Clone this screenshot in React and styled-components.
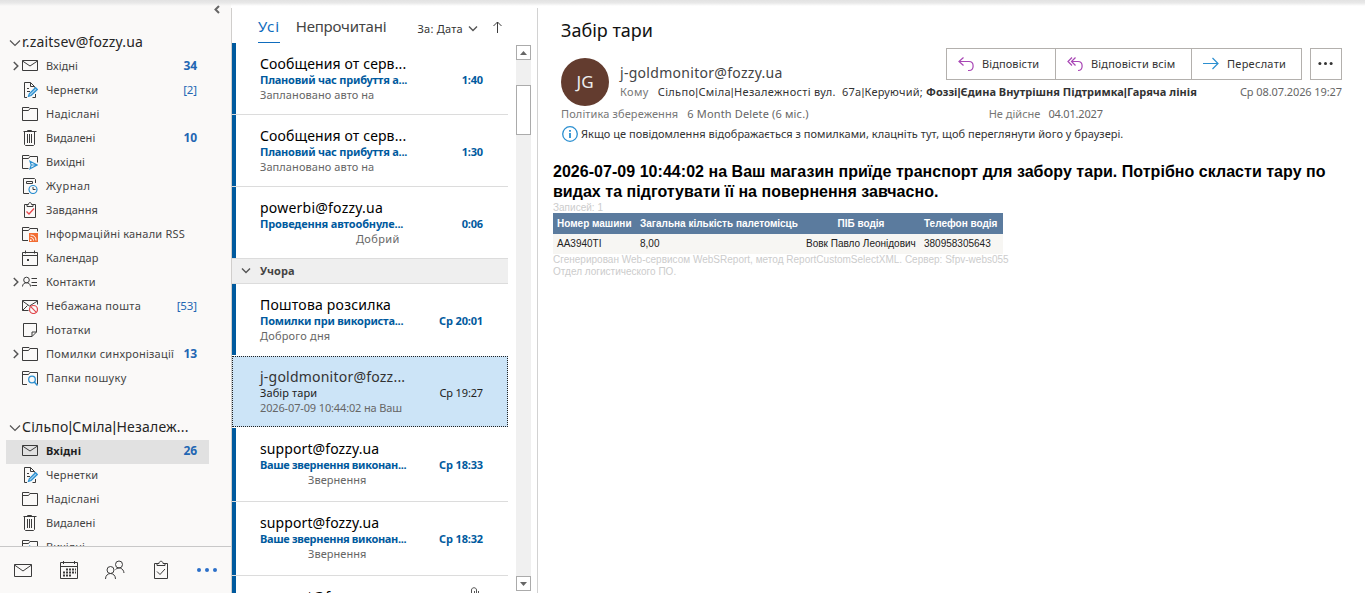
import React from "react";
import styled, { createGlobalStyle, css } from "styled-components";

const GlobalStyle = createGlobalStyle`
  * {
    box-sizing: border-box;
  }
  body {
    margin: 0;
    overflow: hidden;
    background-color: #fff;
    color: #333;
    font-family: "Noto Sans", "Open Sans", sans-serif;
    font-size: 11px;
    line-height: 16px;
  }
`;

const Page = styled.div`
  position: relative;
  display: flex;
  width: 1365px;
  height: 593px;
  overflow: hidden;
`;

const TopShade = styled.div`
  position: absolute;
  top: 0;
  left: 0;
  right: 0;
  height: 6px;
  background: linear-gradient(#e2e2e2 0, #e9e9e9 50%, rgba(245, 245, 245, 0) 100%);
`;

const Label = styled.span`
  white-space: pre;
  letter-spacing: ${(p) => p.$ls || 0}px;
  .pipe {
    font-family: "Liberation Sans", sans-serif;
    line-height: 1;
  }
`;

// the bar between name parts is set in a narrower font
function Text({ children, ...rest }) {
  const parts = String(children).split("|");
  return (
    <Label {...rest}>
      {parts.map((part, i) => (
        <React.Fragment key={i}>
          {i > 0 && <span className="pipe">|</span>}
          {part}
        </React.Fragment>
      ))}
    </Label>
  );
}

/* ---------- folders ---------- */

const Sidebar = styled.aside`
  display: flex;
  flex-direction: column;
  flex: none;
  width: 231px;
  background-color: #faf9f8;
`;

const Folders = styled.div`
  flex: 1;
  min-height: 0;
  overflow: hidden;
`;

const CollapseBar = styled.div`
  display: flex;
  justify-content: flex-end;
  height: 30px;
  padding: 5px 10px 0 0;
`;

const Account = styled.div`
  display: flex;
  align-items: center;
  gap: 1px;
  height: 25px;
  padding: 0 0 2px 9px;
  color: #262626;
  font-size: 14px;
  .arrow {
    margin-top: 2px;
  }
`;

const FolderGroup = styled.div`
  & + & {
    margin-top: 24px;
  }
`;

const Folder = styled.div`
  display: flex;
  align-items: center;
  width: 203px;
  height: 24px;
  margin-left: 6px;
  padding: 0 12px 2px 0;
  color: #444;
  ${(p) =>
    p.$selected &&
    css`
      background-color: #e1e1e1;
      color: #1f1f1f;
      font-weight: 700;
    `}
  .expander {
    display: flex;
    width: 16px;
    padding-left: 7px;
  }
  .icon {
    display: flex;
    margin-right: 8px;
  }
  .name {
    flex: 1;
  }
`;

const Count = styled.span`
  color: #2266b3;
  font-size: ${(p) => (p.$bold ? 12 : 11.5)}px;
  font-weight: ${(p) => (p.$bold ? 700 : 400)};
  letter-spacing: -0.1px;
`;

const Nav = styled.nav`
  display: flex;
  align-items: center;
  height: 47px;
  padding: 0 0 1px 13px;
  border-top: 1px solid #c8c8c8;
  svg {
    flex: none;
    margin-right: 26px;
  }
`;

/* ---------- message list ---------- */

const ListPane = styled.section`
  display: flex;
  flex-direction: column;
  flex: none;
  width: 307px;
  height: 585px;
  margin-top: 8px;
  border-left: 1px solid #d0cecc;
  border-right: 1px solid #d2d2d2;
  background-color: #fff;
`;

const ListHeader = styled.div`
  display: flex;
  align-items: center;
  height: 35px;
  padding-left: 26px;
`;

const Tab = styled.div`
  height: 35px;
  margin-right: 16px;
  padding-top: 7px;
  border-bottom: 1px solid ${(p) => (p.$active ? "#0f6cbd" : "transparent")};
  color: ${(p) => (p.$active ? "#0f6cbd" : "#444")};
  font-size: 15px;
  line-height: 23px;
  letter-spacing: ${(p) => p.$ls}px;
`;

const Sort = styled.div`
  display: flex;
  align-items: center;
  margin-left: 15px;
  padding-top: 6px;
  svg {
    margin-left: 5px;
  }
  .direction {
    margin: -3px 0 0 15px;
  }
`;

const ListBody = styled.div`
  display: flex;
  flex: 1;
  min-height: 0;
`;

const Messages = styled.div`
  width: 276px;
  overflow: hidden;
`;

const Message = styled.article`
  height: ${(p) => p.$height || 72}px;
  padding: 11px 25px 0 28px;
  border-bottom: 1px solid ${(p) => (p.$last ? "transparent" : "#dcdcdc")};
  background: linear-gradient(#005a9e, #005a9e) left top / 4px 100% no-repeat;
  ${(p) =>
    p.$selected &&
    css`
      height: 71px;
      margin-bottom: 1px;
      padding: 10px 24px 0 27px;
      border: 1px dotted #222;
      background: #cce4f7;
    `}
`;

const Sender = styled.div`
  display: flex;
  justify-content: space-between;
  height: 18px;
  color: ${(p) => (p.$selected ? "#333" : "#000")};
  font-size: 14px;
  line-height: 20px;
`;

const Subject = styled.div`
  display: flex;
  justify-content: space-between;
  height: 15px;
  color: ${(p) => (p.$read ? "#222" : "#005a9e")};
  font-weight: ${(p) => (p.$read ? 400 : 700)};
  line-height: 15px;
`;

const Preview = styled.div`
  padding-left: ${(p) => p.$indent || 0}px;
  color: #666;
  line-height: 16px;
`;

const GroupHeader = styled.div`
  display: flex;
  align-items: center;
  height: 25px;
  padding-left: 9px;
  border-bottom: 1px solid #dcdcdc;
  background-color: #efefef;
  color: #444;
  font-weight: 700;
  svg {
    margin-right: 9px;
  }
`;

const Scrollbar = styled.div`
  display: flex;
  flex-direction: column;
  align-items: stretch;
  width: 15px;
  height: 546px;
  margin: 2px 0 0 8px;
  background-color: #f0f0f0;
`;

const ScrollButton = styled.div`
  display: flex;
  align-items: center;
  justify-content: center;
  height: 15px;
  border: 1px solid #ababab;
  background-color: #fff;
`;

const ScrollThumb = styled.div`
  height: 50px;
  margin: 25px 0 auto;
  border: 1px solid #ababab;
  background-color: #fff;
`;

/* ---------- reading pane ---------- */

const Reader = styled.main`
  flex: 1;
  min-width: 0;
  padding-top: 18px;
`;

const Title = styled.h1`
  height: 30px;
  margin: 0 0 0 23px;
  color: #111;
  font-size: 18px;
  font-weight: 400;
  line-height: 24px;
`;

const Envelope = styled.header`
  display: flex;
  height: 58px;
  padding: 0 23px;
`;

const Avatar = styled.div`
  flex: none;
  width: 48px;
  height: 48px;
  margin: 10px 11px 0 0;
  border-radius: 50%;
  background-color: #633c2f;
  color: #eee;
  font-size: 17px;
  line-height: 48px;
  text-align: center;
`;

const Details = styled.div`
  flex: 1;
`;

const Row = styled.div`
  display: flex;
  align-items: flex-start;
  justify-content: space-between;
`;

const From = styled.div`
  padding-top: 15px;
  color: #444;
  font-size: 14px;
  line-height: 20px;
`;

const Actions = styled.div`
  display: flex;
`;

const Action = styled.button`
  display: flex;
  align-items: center;
  width: ${(p) => p.$width}px;
  height: 32px;
  padding: 0 0 0 11px;
  border: 1px solid #b3b0ad;
  background-color: #fff;
  color: #333;
  font: inherit;
  & + & {
    margin-left: -1px;
  }
  &:last-child {
    margin-left: 8px;
    padding-left: 7px;
  }
  svg {
    margin-right: 8px;
  }
`;

const Recipients = styled(Row)`
  height: 16px;
  margin-top: 1px;
  color: #333;
  .muted {
    margin-right: 9px;
    color: #777;
  }
  .date {
    color: #666;
  }
  b {
    margin-left: 3px;
  }
`;

const Policy = styled.div`
  display: flex;
  height: 18px;
  padding-left: 23px;
  color: #777;
  > span {
    margin-right: 9px;
  }
  .value {
    color: #666;
  }
  .expires {
    margin: 0 8px 0 171px;
  }
`;

const Info = styled.div`
  display: flex;
  align-items: center;
  gap: 3px;
  height: 20px;
  padding-left: 24px;
  color: #333;
`;

const Letter = styled.div`
  margin: 18px 0 0 15px;
  font: 10px/12px "Liberation Sans", Arial, sans-serif;
  h2 {
    margin: 0;
    color: #000;
    font-size: 16px;
    line-height: 20px;
    letter-spacing: 0.035px;
  }
`;

const Note = styled.div`
  height: ${(p) => p.$height}px;
  color: #ccc;
  letter-spacing: 0.01px;
`;

const Table = styled.table`
  width: 450px;
  table-layout: fixed;
  border-collapse: collapse;
  th,
  td {
    height: 21px;
    padding: 0 4px;
    white-space: nowrap;
    text-align: left;
  }
  th {
    background-color: #5b7b9e;
    color: #fff;
  }
  th.center {
    text-align: center;
  }
  td {
    height: 20px;
    background-color: #f7f6f3;
    color: #222;
  }
`;

/* ---------- icons ---------- */

const ink = "#3b3b3b";
const blue = "#2b8fd0";

function Svg({ size = 16, width, height, children, stroke = ink, sw = 1, ...rest }) {
  const w = width || size;
  const h = height || size;
  return (
    <svg width={w} height={h} viewBox={`0 0 ${w} ${h}`} fill="none" stroke={stroke} strokeWidth={sw} {...rest}>
      {children}
    </svg>
  );
}

const folderPath = "M.5 14.5V1.5h6.500l1 1h7.500v12zM.5 4.500h6l1.500-2";

const icons = {
  mail: (
    <Svg>
      <path d="M.5 2.500h15v10H.5zM.5 3l7.500 5 7.500-5" />
    </Svg>
  ),
  draft: (
    <Svg>
      <path d="M5 15.500H2.500V.5h6l4 4v1M8.500.5v4h4M5 6.500h2M5 9.500h3M13.500 12v3.500h-3" />
      <path d="M6.500 14.300l.8-2.600 6.200-6 1.800 1.800-6.200 6z" fill="#a9d3ee" stroke={blue} strokeWidth={1.200} />
    </Svg>
  ),
  folder: (
    <Svg>
      <path d={folderPath} />
    </Svg>
  ),
  trash: (
    <Svg>
      <path d="M1.500 1.500h13M5.500 1.500V.5h4v1M2.500 2v12.500l1 1h8l1-1V2M5.500 4v9M7.500 4v9M9.500 4v9" />
    </Svg>
  ),
  outbox: (
    <Svg>
      <path d="M6.500 14.500H.5v-13h6.500l1 1h7.500v6M.5 4.500h6l1.500-2" />
      <path d="M8 7.200l7.200 3.800-7.200 3.800 1.200-3.800zM9 11h6" stroke={blue} strokeWidth={1.200} />
    </Svg>
  ),
  journal: (
    <Svg>
      <path d="M7 15.500H1.500V.5h11l1 1V5M4.500 3.500h6v2h-6z" />
      <circle cx="11" cy="11.500" r="4" stroke={blue} strokeWidth={1.200} fill="#faf9f8" />
      <path d="M11 9v2.500h2.500" />
    </Svg>
  ),
  tasks: (
    <Svg>
      <path d="M5 2.500H2.500v13h11v-13H11M5 4.500v-2h1.500c0-2.600 3-2.600 3 0H11v2z" />
      <path d="M4.500 9.500l2.500 2.500 5-5.500" stroke="#e8474c" strokeWidth={1.300} />
    </Svg>
  ),
  rss: (
    <Svg>
      <path d="M6 14.500H.5v-13h6.500l1 1h7.500v3M.5 4.500h6l1.500-2" />
      <path d="M7 7h9v9H7z" fill="#f26c32" stroke="none" />
      <path d="M8.500 9c3.500 0 5.500 2 5.500 5.500M8.500 11.500c2 0 3 1 3 3" stroke="#fff" />
      <path d="M8 13.500h1.500V15H8z" fill="#fff" stroke="none" />
    </Svg>
  ),
  calendar: (
    <Svg>
      <path d="M.5 2.500h15v13H.5zM.5 5.500h15M3.500.5v3M12.500.5v3" />
      <path d="M5 9h2v2H5z" fill={ink} stroke="none" />
    </Svg>
  ),
  contacts: (
    <Svg>
      <circle cx="4.500" cy="6" r="2.800" />
      <path d="M.5 12.500c0-5 8-5 8 0M9.500 4.500H15M9.500 8.500H15M9.500 11.500H15" />
    </Svg>
  ),
  junk: (
    <Svg>
      <path d="M6.500 12.500h-6v-10h15v4M.5 3l7 5 8-5M.5 12.500l5-5" />
      <circle cx="11.500" cy="11.500" r="4" stroke="#e0474c" strokeWidth={1.200} fill="#faf9f8" />
      <path d="M8.700 8.700l5.600 5.600" stroke="#e0474c" strokeWidth={1.200} />
    </Svg>
  ),
  note: (
    <Svg>
      <path d="M1.500 1.500h13v8.500l-4.500 4.500H1.500zM10 14.500V10h4.500" />
    </Svg>
  ),
  search: (
    <Svg>
      <path d="M5 14.500H.5v-13h6.500l1 1h7.500v12M.5 4.500h6l1.500-2" />
      <circle cx="10" cy="9.500" r="3.300" stroke={blue} strokeWidth={1.300} fill="#faf9f8" />
      <path d="M12.300 12l3.200 3.500" stroke={blue} strokeWidth={1.500} />
    </Svg>
  ),
};

const ChevronDown = ({ size = 12, sw = 1.2 }) => (
  <Svg width={size} height={8} sw={sw} stroke="#555" className="arrow">
    <path d={`M1 1.500l${size / 2 - 1} ${size / 2 - 1} ${size / 2 - 1}-${size / 2 - 1}`} />
  </Svg>
);

const ChevronRight = () => (
  <Svg width={6} height={10} sw={1.5} stroke="#555">
    <path d="M.8 1l4 4-4 4" />
  </Svg>
);

/* ---------- data ---------- */

const mainFolders = [
  { icon: "mail", name: "Вхідні", count: "34", bold: true, open: true },
  { icon: "draft", name: "Чернетки", count: "[2]", ls: 0.2 },
  { icon: "folder", name: "Надіслані", ls: 0.25 },
  { icon: "trash", name: "Видалені", count: "10", bold: true, ls: 0.05 },
  { icon: "outbox", name: "Вихідні", ls: 0.02 },
  { icon: "journal", name: "Журнал", ls: 0.5 },
  { icon: "tasks", name: "Завдання", ls: 0.08 },
  { icon: "rss", name: "Інформаційні канали RSS", ls: 0.2 },
  { icon: "calendar", name: "Календар", ls: 0.1 },
  { icon: "contacts", name: "Контакти", open: true, ls: 0.1 },
  { icon: "junk", name: "Небажана пошта", count: "[53]", ls: 0.3 },
  { icon: "note", name: "Нотатки", ls: 0.2 },
  { icon: "folder", name: "Помилки синхронізації", count: "13", bold: true, open: true, ls: 0.23 },
  { icon: "search", name: "Папки пошуку", ls: 0.35 },
];

const sharedFolders = [
  { icon: "mail", name: "Вхідні", count: "26", bold: true, selected: true, ls: 0.1 },
  { icon: "draft", name: "Чернетки", ls: 0.2 },
  { icon: "folder", name: "Надіслані", ls: 0.25 },
  { icon: "trash", name: "Видалені", ls: 0.05 },
  { icon: "outbox", name: "Вихідні", ls: 0.02 },
];

const today = [
  { from: ["Сообщения от серв...", 0.13], subject: ["Плановий час прибуття а...", -0.23], time: "1:40", preview: ["Заплановано авто на", 0.07] },
  { from: ["Сообщения от серв...", 0.13], subject: ["Плановий час прибуття а...", -0.23], time: "1:30", preview: ["Заплановано авто на", 0.07] },
  { from: ["powerbi@fozzy.ua", 0.22], subject: ["Проведення автообнуле...", -0.15], time: "0:06", preview: ["Добрий", 0.35], indent: 96 },
];

const yesterday = [
  { from: ["Поштова розсилка", 0.22], subject: ["Помилки при використа...", -0.24], time: "Ср 20:01", preview: ["Доброго дня", 0.2], last: true },
  { from: ["j-goldmonitor@fozz...", 0.22], subject: ["Забір тари", 0.1], time: "Ср 19:27", preview: ["2026-07-09 10:44:02 на Ваш", -0.14], selected: true },
  { from: ["support@fozzy.ua", 0.1], subject: ["Ваше звернення виконан...", -0.33], time: "Ср 18:33", preview: ["Звернення", 0.05], indent: 48, height: 74 },
  { from: ["support@fozzy.ua", 0.1], subject: ["Ваше звернення виконан...", -0.33], time: "Ср 18:32", preview: ["Звернення", 0.05], indent: 48, height: 74 },
  { from: ["support@fozzy.ua", 0.1], subject: ["Ваше звернення виконан...", -0.33], time: "Ср 18:31", preview: ["Звернення", 0.05], indent: 48, height: 74, clip: true },
];

function FolderList({ items }) {
  return items.map((f) => (
    <Folder key={f.name} $selected={f.selected}>
      <span className="expander">{f.open && <ChevronRight />}</span>
      <span className="icon">{icons[f.icon]}</span>
      <Text className="name" $ls={f.ls}>
        {f.name}
      </Text>
      {f.count && <Count $bold={f.bold}>{f.count}</Count>}
    </Folder>
  ));
}

function MessageRow({ m }) {
  return (
    <Message $height={m.height} $selected={m.selected} $last={m.last}>
      <Sender $selected={m.selected}>
        <Text $ls={m.from[1]}>{m.from[0]}</Text>
        {m.clip && (
          <Svg width={13} height={16} stroke="#555">
            <path d="M1.500 10V3c0-3 5-3 5 0v9M4.500 4v7M8.500 4v7" />
          </Svg>
        )}
      </Sender>
      <Subject $read={m.selected}>
        <Text $ls={m.subject[1]}>{m.subject[0]}</Text>
        <Text $ls={-0.15}>{m.time}</Text>
      </Subject>
      <Preview $indent={m.indent}>
        <Text $ls={m.preview[1]}>{m.preview[0]}</Text>
      </Preview>
    </Message>
  );
}

export default function App() {
  return (
    <Page>
      <GlobalStyle />
      <Sidebar>
        <Folders>
          <CollapseBar>
            <Svg width={8} height={9} sw={2} stroke="#666">
              <path d="M6 1L2.500 4.500 6 8" />
            </Svg>
          </CollapseBar>
          <FolderGroup>
            <Account>
              <ChevronDown size={12} />
              <Text $ls={0.2}>r.zaitsev@fozzy.ua</Text>
            </Account>
            <FolderList items={mainFolders} />
          </FolderGroup>
          <FolderGroup>
            <Account>
              <ChevronDown size={12} />
              <Text $ls={0.2}>Сільпо|Сміла|Незалеж...</Text>
            </Account>
            <FolderList items={sharedFolders} />
          </FolderGroup>
        </Folders>
        <Nav>
          <Svg width={20} height={20}>
            <path d="M1.500 4.500h17v12h-17zM1.500 5l8.500 6 8.500-6" />
          </Svg>
          <Svg width={20} height={20}>
            <path d="M1.500 2.500h17v16h-17zM1.500 6.500h17M4.500 1v3M15.500 1v3" />
            <path d="M7 9.500h10M4 12.500h13M4 15.500h8" strokeWidth={2} strokeDasharray="2 1" />
          </Svg>
          <Svg width={20} height={20}>
            <circle cx="5.500" cy="10" r="3.500" />
            <path d="M.5 19c0-7.300 10-7.300 10 0" />
            <circle cx="14" cy="4.500" r="3.500" />
            <path d="M10.500 9.500c3-3 8-1.500 8.500 3.500" />
          </Svg>
          <Svg width={20} height={20}>
            <path d="M6 3.500H3.500v15h13v-15H14M6 5.500v-2h2c0-3 4-3 4 0h2v2zM6 11.500l3 3 5-5.500" />
          </Svg>
          <Svg width={20} height={20} stroke="none">
            <circle cx="2" cy="10" r="2" fill="#2b70c9" />
            <circle cx="10" cy="10" r="2" fill="#2b70c9" />
            <circle cx="18" cy="10" r="2" fill="#2b70c9" />
          </Svg>
        </Nav>
      </Sidebar>

      <ListPane>
        <ListHeader>
          <Tab $active $ls={0.7}>
            Усі
          </Tab>
          <Tab $ls={-0.2}>Непрочитані</Tab>
          <Sort>
            <Text $ls={0.25}>За: Дата</Text>
            <ChevronDown size={10} sw={1.4} />
            <Svg width={10} height={12} className="direction">
              <path d="M4.500 12V1M.5 5l4-4 4 4" />
            </Svg>
          </Sort>
        </ListHeader>
        <ListBody>
          <Messages>
            {today.map((m, i) => (
              <MessageRow key={i} m={m} />
            ))}
            <GroupHeader>
              <ChevronDown size={10} sw={1.4} />
              <Text $ls={0.1}>Учора</Text>
            </GroupHeader>
            {yesterday.map((m, i) => (
              <MessageRow key={i} m={m} />
            ))}
          </Messages>
          <Scrollbar>
            <ScrollButton>
              <Svg width={7} height={4} stroke="none">
                <path d="M0 4l3.500-4L7 4z" fill="#666" />
              </Svg>
            </ScrollButton>
            <ScrollThumb />
            <ScrollButton>
              <Svg width={7} height={4} stroke="none">
                <path d="M0 0l3.500 4L7 0z" fill="#666" />
              </Svg>
            </ScrollButton>
          </Scrollbar>
        </ListBody>
      </ListPane>

      <Reader>
        <Title>
          <Text>Забір тари</Text>
        </Title>
        <Envelope>
          <Avatar>JG</Avatar>
          <Details>
            <Row>
              <From>
                <Text $ls={0.29}>j-goldmonitor@fozzy.ua</Text>
              </From>
              <Actions>
                <Action $width={110}>
                  <Svg stroke="#a846b5" sw={1.2}>
                    <path d="M5.500 1.500l-4.500 4 4.500 4M1 5.500h10c5.500 0 5.500 9 0 9h-1" />
                  </Svg>
                  <Text $ls={0.1}>Відповісти</Text>
                </Action>
                <Action $width={137}>
                  <Svg stroke="#a846b5" sw={1.2}>
                    <path d="M5 1.500l-4 4 4 4M8.500 1.500l-4 4 4 4M4.500 5.500H11c5.500 0 5.500 9 0 9" />
                  </Svg>
                  <Text $ls={0.16}>Відповісти всім</Text>
                </Action>
                <Action $width={111}>
                  <Svg stroke={blue} sw={1.2}>
                    <path d="M0 7.500h15M9.500 2L15 7.500 9.500 13" />
                  </Svg>
                  <Text $ls={0.27}>Переслати</Text>
                </Action>
                <Action $width={32}>
                  <Svg stroke="none">
                    <circle cx="2" cy="7.500" r="1.600" fill="#333" />
                    <circle cx="8" cy="7.500" r="1.600" fill="#333" />
                    <circle cx="14" cy="7.500" r="1.600" fill="#333" />
                  </Svg>
                </Action>
              </Actions>
            </Row>
            <Recipients>
              <div>
                <Text className="muted" $ls={0.4}>
                  Кому
                </Text>
                <Text $ls={0.31}>{"Сільпо|Сміла|Незалежності вул.  "}</Text>
                <Text $ls={0.22}>67а|Керуючий;</Text>
                <b>
                  <Text $ls={0.01}>Фоззі|Єдина Внутрішня Підтримка|Гаряча лінія</Text>
                </b>
              </div>
              <Text className="date" $ls={-0.09}>
                Ср 08.07.2026 19:27
              </Text>
            </Recipients>
          </Details>
        </Envelope>
        <Policy>
          <Text $ls={0.12}>Політика збереження</Text>
          <Text className="value" $ls={0.15}>
            6 Month Delete (6 міс.)
          </Text>
          <Text className="expires">Не дійсне</Text>
          <Text className="value" $ls={-0.18}>
            04.01.2027
          </Text>
        </Policy>
        <Info>
          <Svg stroke={blue} sw={1.3}>
            <circle cx="8" cy="8" r="7.300" />
            <path d="M8 7v5M8 4v1.800" strokeWidth={1.800} />
          </Svg>
          <Text $ls={0.025}>
            Якщо це повідомлення відображається з помилками, клацніть тут, щоб переглянути його у браузері.
          </Text>
        </Info>
        <Letter>
          <h2>
            2026-07-09 10:44:02 на Ваш магазин приїде транспорт для забору тари. Потрібно скласти тару по
            <br />
            видах та підготувати її на повернення завчасно.
          </h2>
          <Note $height={11}>Записей: 1</Note>
          <Table>
            <colgroup>
              <col width="83" />
              <col width="166" />
              <col width="118" />
              <col width="83" />
            </colgroup>
            <thead>
              <tr>
                <th>Номер машини</th>
                <th>Загальна кількість палетомісць</th>
                <th className="center">ПІБ водія</th>
                <th>Телефон водія</th>
              </tr>
            </thead>
            <tbody>
              <tr>
                <td>AA3940TI</td>
                <td>8,00</td>
                <td>Вовк Павло Леонідович</td>
                <td>380958305643</td>
              </tr>
            </tbody>
          </Table>
          <Note $height={24}>
            Сгенерирован Web-сервисом WebSReport, метод ReportCustomSelectXML. Сервер: Sfpv-webs055
            <br />
            Отдел логистического ПО.
          </Note>
        </Letter>
      </Reader>
      <TopShade />
    </Page>
  );
}
